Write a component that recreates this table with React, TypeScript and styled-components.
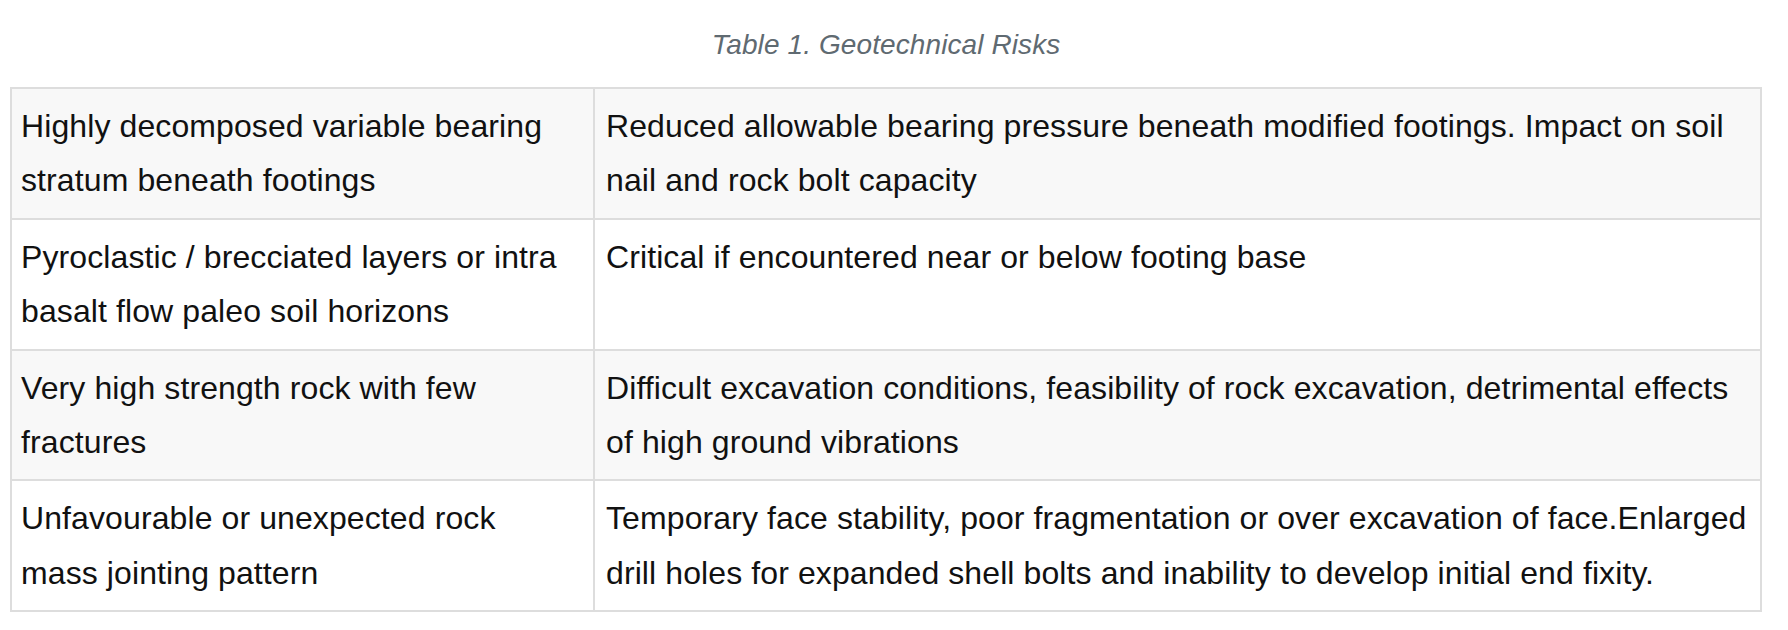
import React from "react";
import styled, { createGlobalStyle } from "styled-components";

const GlobalStyle = createGlobalStyle`
  html, body {
    margin: 0;
    padding: 0;
    background: #ffffff;
  }
  body {
    font-family: "Liberation Sans", Arial, Helvetica, sans-serif;
    -webkit-font-smoothing: antialiased;
  }
`;

const Page = styled.div`
  padding: 21px 0 0 10px;
  width: 1752px;
`;

const Caption = styled.div`
  font-size: 28px;
  line-height: 48px;
  font-style: italic;
  letter-spacing: 0.1px;
  color: #5f6a71;
  text-align: center;
  margin-bottom: 18px;
`;

const Table = styled.div`
  display: flex;
  flex-direction: column;
  width: 1752px;
  box-sizing: border-box;
  border-top: 2px solid #dddddd;
  border-left: 2px solid #dddddd;
`;

const Row = styled.div<{ $shaded: boolean }>`
  display: grid;
  grid-template-columns: 583px 1fr;
  background: ${(p) => (p.$shaded ? "#f8f8f8" : "#ffffff")};
`;

const Cell = styled.div<{ $first?: boolean }>`
  box-sizing: border-box;
  border-right: 2px solid #dddddd;
  border-bottom: 2px solid #dddddd;
  padding: ${(p) => (p.$first ? "10px 20px 10px 9px" : "10px 4px 10px 11px")};
  font-size: 32px;
  line-height: 54.4px;
  letter-spacing: 0.1px;
  color: #111111;
`;

const rows: [string, string][] = [
  [
    "Highly decomposed variable bearing stratum beneath footings",
    "Reduced allowable bearing pressure beneath modified footings. Impact on soil nail and rock bolt capacity",
  ],
  [
    "Pyroclastic / brecciated layers or intra basalt flow paleo soil horizons",
    "Critical if encountered near or below footing base",
  ],
  [
    "Very high strength rock with few fractures",
    "Difficult excavation conditions, feasibility of rock excavation, detrimental effects of high ground vibrations",
  ],
  [
    "Unfavourable or unexpected rock mass jointing pattern",
    "Temporary face stability, poor fragmentation or over excavation of face.Enlarged drill holes for expanded shell bolts and inability to develop initial end fixity.",
  ],
];

export default function App() {
  return (
    <>
      <GlobalStyle />
      <Page>
        <Caption>Table 1. Geotechnical Risks</Caption>
        <Table>
          {rows.map(([risk, impact], i) => (
            <Row key={i} $shaded={i % 2 === 0}>
              <Cell $first>{risk}</Cell>
              <Cell>{impact}</Cell>
            </Row>
          ))}
        </Table>
      </Page>
    </>
  );
}
